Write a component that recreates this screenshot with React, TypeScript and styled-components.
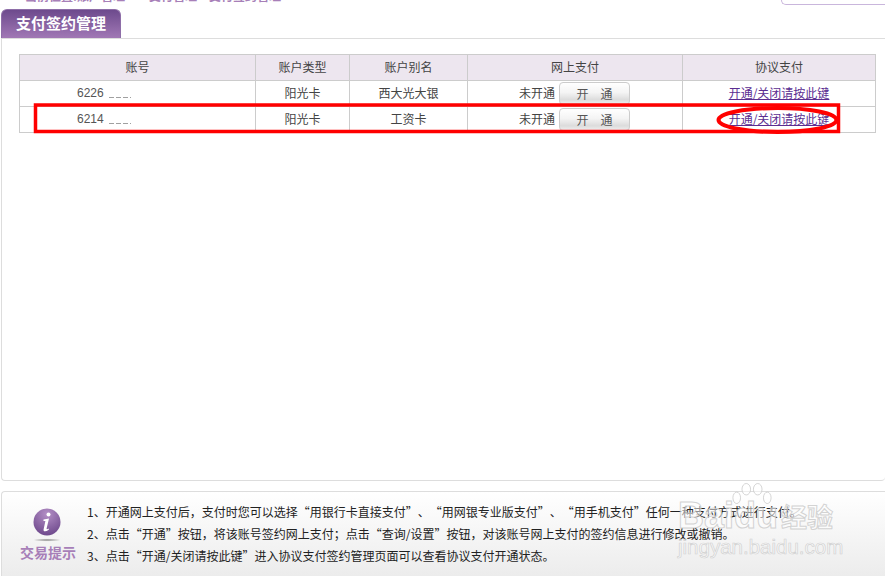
import React from "react";
import styled, { createGlobalStyle } from "styled-components";

const Global = createGlobalStyle`
  html, body { margin: 0; padding: 0; background: #fff; overflow: hidden; }
  body { font-family: "Liberation Sans", "Noto Sans CJK SC", sans-serif; font-size: 12px; color: #444; }
`;
const Page = styled.div`
  position: relative;
  width: 885px;
  height: 576px;
  overflow: hidden;
  display: flex;
  flex-direction: column;
`;
const TopBar = styled.div`
  height: 9px;
  flex: none;
  display: flex;
  justify-content: space-between;
  overflow: hidden;
`;
const Crumb = styled.div`
  margin: -10px 0 0 25px;
  font: bold 12px/12px "Noto Sans CJK SC", sans-serif;
  color: #a77fb8;
  white-space: pre;
`;
const TopBox = styled.div`
  width: 103px;
  height: 4px;
  border-bottom: 1px solid #c9b6dc;
  border-left: 1px solid #c9b6dc;
  border-radius: 0 0 0 8px;
`;
const TabStrip = styled.div`
  height: 29px;
  flex: none;
  padding-left: 1px;
  display: flex;
`;
const Tab = styled.div`
  width: 120px;
  box-sizing: border-box;
  padding-bottom: 2px;
  border-radius: 6px 6px 0 0;
  border: 1px solid #8e6ea8;
  border-bottom: 0;
  background: linear-gradient(#6d4a8d, #a178b5);
  color: #fff;
  font: bold 15px/26px "Noto Sans CJK SC", sans-serif;
  text-align: center;
`;
const Panel = styled.div`
  height: 443px;
  flex: none;
  box-sizing: border-box;
  margin-left: 1px;
  padding: 15px 9px 0 17px;
  border: 1px solid #ddd;
  border-right: 0;
  border-radius: 0 0 4px 4px;
`;
const Table = styled.table`
  width: 857px;
  table-layout: fixed;
  border-collapse: collapse;
  font-family: "Noto Sans CJK SC", sans-serif;
  font-size: 12px;
  color: #444;
`;
const Head = styled.th`
  height: 22px;
  padding: 0 0 3px;
  border: 1px solid #ccc;
  background: #ede6ef;
  font-weight: 400;
  text-align: center;
`;
const Cell = styled.td`
  height: 23px;
  padding: 0 0 2px;
  border: 1px solid #ccc;
  text-align: center;
`;
const AccountCell = styled(Cell)`
  text-align: left;
  padding-left: 57px;
  font-family: "Liberation Sans", sans-serif;
  color: #555;
`;
const PayCell = styled.td`
  height: 25px;
  padding: 0;
  border: 1px solid #ccc;
`;
const Mask = styled.span`
  display: inline-block;
  width: 22px;
  height: 1px;
  margin-left: 5px;
  vertical-align: -1px;
  background: repeating-linear-gradient(90deg, #a0a0a0 0 5px, #fff 5px 7px);
`;
const PayRow = styled.div`
  display: flex;
  align-items: center;
  gap: 4px;
  padding-left: 51px;
`;
const PayState = styled.span`
  padding-bottom: 3px;
`;
const OpenButton = styled.button`
  width: 71px;
  height: 23px;
  padding: 0;
  border: 1px solid #ccc;
  border-radius: 4px;
  background: linear-gradient(#fff 0, #f4f4f4 45%, #dcdcdc 80%, #eee 100%);
  color: #555;
  font: 12px "Noto Sans CJK SC", sans-serif;
  white-space: pre;
`;
const Link = styled.a`
  color: #5b2d91;
  text-decoration: underline;
`;
const Gap = styled.div`
  height: 10px;
  flex: none;
`;
const Tips = styled.div`
  flex: 1;
  margin-left: 1px;
  border: 1px solid #ddd;
  border-right: 0;
  border-bottom: 0;
  border-radius: 4px 0 0 0;
  background: linear-gradient(#fff, #ececec);
  display: flex;
  padding-left: 17px;
`;
const TipBadge = styled.div`
  width: 58px;
  flex: none;
  margin-top: 16px;
  display: flex;
  flex-direction: column;
  align-items: center;
`;
const TipLabel = styled.div`
  font: bold 14px/20px "Noto Sans CJK SC", sans-serif;
  color: #a77fb8;
  white-space: nowrap;
`;
const TipList = styled.ol`
  list-style: none;
  margin: 9px 0 0 10px;
  padding: 0;
  font: 12px/22px "Noto Sans CJK SC", sans-serif;
  color: #222;
  white-space: nowrap;
  text-spacing-trim: space-all;
`;
const Quote = styled.span`
  font-feature-settings: "fwid";
`;
const Annotation = styled.svg`
  position: absolute;
  left: 0;
  top: 0;
  pointer-events: none;
`;
const Watermark = styled.div`
  position: absolute;
  left: 678px;
  top: 482px;
  width: 165px;
  color: rgba(255, 255, 255, 0.5);
  font-family: "Liberation Sans", sans-serif;
  -webkit-text-stroke: 1px rgba(200, 200, 200, 0.8);
  pointer-events: none;
`;
const MarkPaw = styled.svg`
  position: absolute;
  left: 53px;
  top: 0;
`;
const MarkRow = styled.div`
  margin-top: 16px;
  display: flex;
  align-items: center;
  font-size: 36px;
  font-weight: 700;
  line-height: 36px;
`;
const MarkCn = styled.span`
  font: 700 26px/36px "Noto Sans CJK SC", sans-serif;
  margin-left: 3px;
`;
const MarkUrl = styled.div`
  font-size: 20.5px;
  line-height: 22px;
  margin-top: 2px;
  -webkit-text-stroke: 0.7px rgba(200, 200, 200, 0.8);
`;

function InfoIcon() {
  return (
    <svg width="30" height="34" viewBox="0 0 30 34">
      <defs>
        <radialGradient id="orb" cx="50%" cy="20%" r="85%">
          <stop offset="0" stopColor="#b48fc6" />
          <stop offset="1" stopColor="#6a4589" />
        </radialGradient>
        <radialGradient id="shadow">
          <stop offset="0" stopColor="#888" />
          <stop offset="1" stopColor="#888" stopOpacity="0" />
        </radialGradient>
      </defs>
      <circle cx="14" cy="14" r="13.5" fill="url(#orb)" />
      <circle cx="15.5" cy="6.5" r="2" fill="#fff" />
      <path d="M10.5 11.5 L16 10.5 L13.6 20.5 Q13.4 22 15.8 20.5 L15.8 21.8 Q11.5 24.6 10.6 22.4 Q10.4 21.6 10.8 20.4 L12.4 13 L10.5 13 Z" fill="#fff" />
      <ellipse cx="14" cy="32" rx="14" ry="1.6" fill="url(#shadow)" />
    </svg>
  );
}

function Tip({ text }: { text: string }) {
  return (
    <li>
      {text.split(/([“”])/).map((part, i) =>
        part === "“" || part === "”" ? <Quote key={i}>{part}</Quote> : part
      )}
    </li>
  );
}

const rows = [
  { no: "6226", alias: "西大光大银" },
  { no: "6214", alias: "工资卡" },
];

const tips = [
  "1、开通网上支付后，支付时您可以选择“用银行卡直接支付”、“用网银专业版支付”、“用手机支付”任何一种支付方式进行支付。",
  "2、点击“开通”按钮，将该账号签约网上支付；点击“查询/设置”按钮，对该账号网上支付的签约信息进行修改或撤销。",
  "3、点击“开通/关闭请按此键”进入协议支付签约管理页面可以查看协议支付开通状态。",
];

export default function App() {
  return (
    <Page>
      <Global />
      <TopBar>
        <Crumb>{"当前位置:账户管理\u2002－\u2002支付管理－支付签约管理"}</Crumb>
        <TopBox />
      </TopBar>
      <TabStrip>
        <Tab>支付签约管理</Tab>
      </TabStrip>
      <Panel>
        <Table>
          <colgroup>
            <col style={{ width: 236 }} />
            <col style={{ width: 94 }} />
            <col style={{ width: 118 }} />
            <col style={{ width: 215 }} />
            <col style={{ width: 193 }} />
          </colgroup>
          <thead>
            <tr>
              <Head>账号</Head>
              <Head>账户类型</Head>
              <Head>账户别名</Head>
              <Head>网上支付</Head>
              <Head>协议支付</Head>
            </tr>
          </thead>
          <tbody>
            {rows.map((r) => (
              <tr key={r.no}>
                <AccountCell>
                  {r.no}
                  <Mask />
                </AccountCell>
                <Cell>阳光卡</Cell>
                <Cell>{r.alias}</Cell>
                <PayCell>
                  <PayRow>
                    <PayState>未开通</PayState>
                    <OpenButton>开　通</OpenButton>
                  </PayRow>
                </PayCell>
                <Cell>
                  <Link href="#">开通/关闭请按此键</Link>
                </Cell>
              </tr>
            ))}
          </tbody>
        </Table>
      </Panel>
      <Gap />
      <Tips>
        <TipBadge>
          <InfoIcon />
          <TipLabel>交易提示</TipLabel>
        </TipBadge>
        <TipList>
          {tips.map((t) => (
            <Tip key={t} text={t} />
          ))}
        </TipList>
      </Tips>
      <Annotation width="885" height="576" viewBox="0 0 885 576">
        <rect x="35.5" y="105" width="803" height="26.5" fill="none" stroke="#f00" strokeWidth="3.5" />
        <ellipse cx="777.5" cy="120" rx="59" ry="12" fill="none" stroke="#f00" strokeWidth="4" />
      </Annotation>
      <Watermark>
        <MarkPaw width="42" height="24" viewBox="0 0 44 24">
          <g fill="rgba(255,255,255,.5)" stroke="rgba(200,200,200,.8)" strokeWidth="1">
            <ellipse cx="6" cy="16" rx="4" ry="6" />
            <ellipse cx="16" cy="7" rx="4.5" ry="6" />
            <ellipse cx="28" cy="7" rx="4.5" ry="6" />
            <ellipse cx="38" cy="16" rx="4" ry="6" />
          </g>
        </MarkPaw>
        <MarkRow>
          Baidu
          <MarkCn>经验</MarkCn>
        </MarkRow>
        <MarkUrl>jingyan.baidu.com</MarkUrl>
      </Watermark>
    </Page>
  );
}
